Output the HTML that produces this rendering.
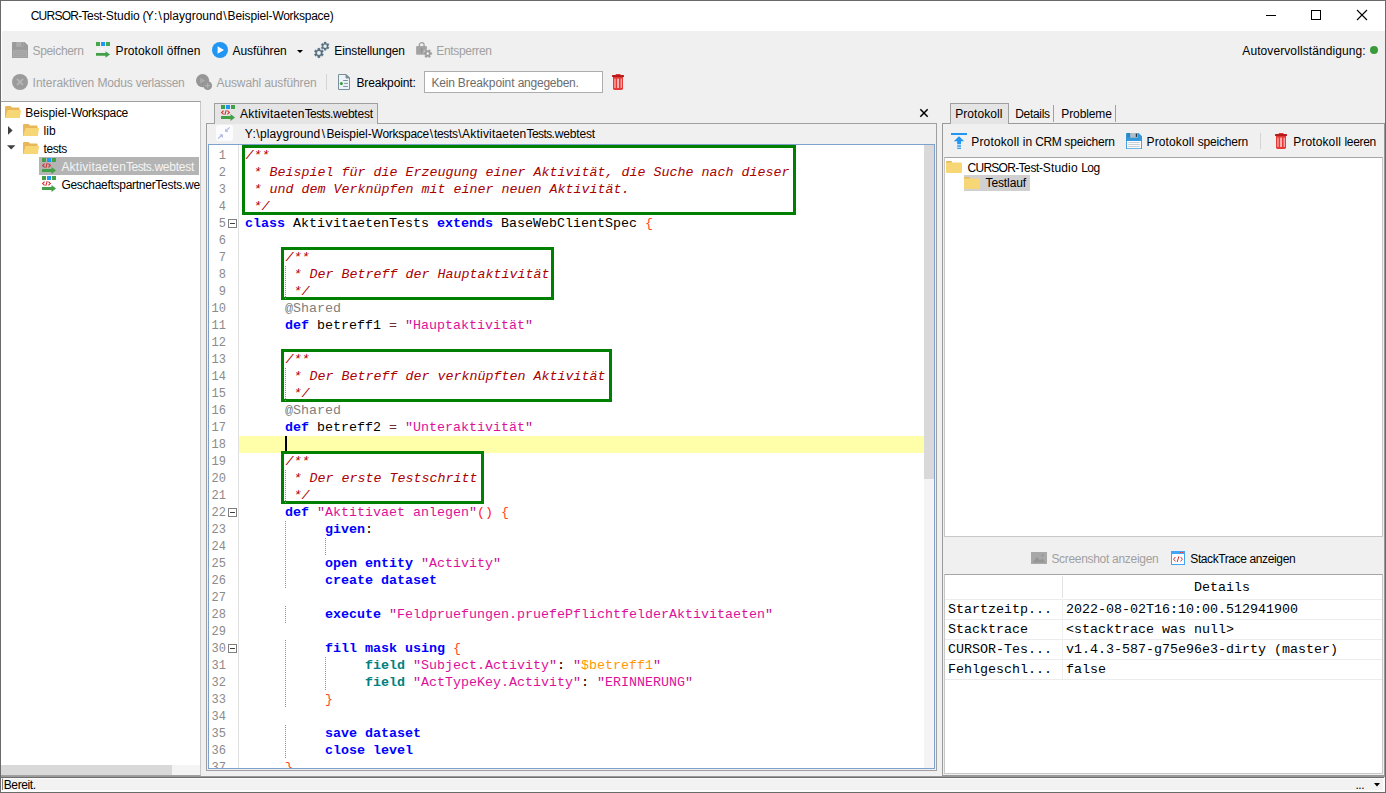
<!DOCTYPE html>
<html lang="de"><head><meta charset="utf-8"><title>CURSOR-Test-Studio</title>
<style>
html,body{margin:0;padding:0;}
body{width:1386px;height:793px;overflow:hidden;background:#f0f0f0;position:relative;font-family:"Liberation Sans",sans-serif;font-size:12px;}
.b{position:absolute;box-sizing:border-box;}
.t{position:absolute;white-space:pre;font-family:"Liberation Sans",sans-serif;font-size:12px;line-height:14px;}
svg{position:absolute;overflow:visible;}
.code{position:absolute;white-space:pre;font-family:"Liberation Mono",monospace;font-size:13.333px;line-height:17px;height:17px;color:#000;}
.ln{position:absolute;white-space:pre;font-family:"Liberation Mono",monospace;font-size:12px;line-height:17px;height:17px;color:#8a8a8a;text-align:right;width:24px;left:202px;}
.c{color:#aa0000;font-style:italic;position:relative;left:0.6px;}
.k{color:#0000ff;font-weight:bold;}
.f{color:#008080;font-weight:bold;}
.s{color:#dd1199;}
.q{color:#c01088;}
.r{color:#ff4a1c;}
.o{color:#703030;}
.v{color:#ff9900;}
.p{color:#ff2030;}
.a{color:#808080;}
.gb{position:absolute;box-sizing:border-box;border:3px solid #008000;}
.guide{position:absolute;width:1px;background:repeating-linear-gradient(to bottom,#909090 0,#909090 1px,transparent 1px,transparent 2px);}
.fold{position:absolute;box-sizing:border-box;width:9px;height:9px;border:1px solid #808080;background:#fff;}
.fold:after{content:"";position:absolute;left:1px;top:3px;width:5px;height:1px;background:#404040;}
.tc{position:absolute;white-space:pre;font-family:"Liberation Mono",monospace;font-size:13.333px;line-height:17px;color:#000;}
</style></head><body>

<div class="b " style="left:0px;top:0px;width:1386px;height:31px;background:#ffffff;"></div>
<span class="t" style="left:30.7px;top:9px;color:#000;letter-spacing:-0.757px;">CURSOR-</span>
<span class="t" style="left:81.4px;top:9px;color:#000;letter-spacing:-0.343px;">Test-</span>
<span class="t" style="left:105.7px;top:9px;color:#000;letter-spacing:0.006px;">Studio </span>
<span class="t" style="left:142.40px;top:9px;color:#000;">(</span>
<span class="t" style="left:145.7px;top:9px;color:#000;letter-spacing:1.061px;">Y:\</span>
<span class="t" style="left:162.9px;top:9px;color:#000;letter-spacing:0.011px;">playground</span>
<span class="t" style="left:223.33px;top:9px;color:#000;">\</span>
<span class="t" style="left:227.6px;top:9px;color:#000;letter-spacing:-0.137px;">Beispiel-</span>
<span class="t " style="left:272.4px;top:9px;color:#000;letter-spacing:-0.280px;">Workspace)</span>
<div class="b " style="left:1266px;top:15px;width:10px;height:1px;background:#000;"></div>
<div class="b " style="left:1311px;top:10px;width:10px;height:10px;border:1px solid #000;"></div>
<svg style="left:1357px;top:10px" width="10" height="10" viewBox="0 0 10 10"><path d="M0 0L10 10M10 0L0 10" stroke="#000" stroke-width="1.1" fill="none"/></svg>
<div class="b " style="left:1px;top:31px;width:1px;height:70px;background:#fff;"></div>
<svg style="left:12px;top:42px" width="16" height="16" viewBox="0 0 16 16"><path d="M0.6 0H12.6L16 3.3V15.4Q16 16 15.4 16H0.6Q0 16 0 15.4V0.6Q0 0 0.6 0Z" fill="#9b9b9b"/><rect x="4.2" y="0" width="7.5" height="4.7" fill="#adadad"/><rect x="9.8" y="0.6" width="1.3" height="3.3" fill="#949494"/><rect x="0.9" y="8" width="14.2" height="7.3" fill="#ababab"/><path d="M2.2 9.6H13.8M2.2 11.6H13.8M2.2 13.6H13.8" stroke="#9e9e9e" stroke-width="0.8"/></svg>
<span class="t " style="left:32.5px;top:44px;color:#a0a0a0;letter-spacing:-0.327px;">Speichern</span>
<svg style="left:96px;top:42px" width="14" height="16" viewBox="0 0 14 16"><rect x="0" y="0" width="4" height="4" fill="#47a84b"/><rect x="5" y="0" width="4" height="4" fill="#2196f3"/><rect x="10" y="0" width="4" height="4" fill="#47a84b"/><path d="M1 5.4L3.6 7.2L1 9ZM5 5.4L7.6 7.2L5 9Z" fill="#fafafa"/><path d="M0 11H9.5V9.2L14 12.4L9.5 15.7V13.8H0Z" fill="#43a047"/></svg>
<span class="t" style="left:115.5px;top:44px;color:#000;letter-spacing:0.127px;">Protokoll </span>
<span class="t " style="left:166.8px;top:44px;color:#000;letter-spacing:0.074px;">öffnen</span>
<svg style="left:212px;top:42px" width="16" height="16" viewBox="0 0 16 16"><circle cx="8" cy="8" r="8" fill="#2196f3"/><path d="M5.6 4.2L12 8L5.6 11.8Z" fill="#fff"/></svg>
<span class="t " style="left:232.5px;top:44px;color:#000;letter-spacing:-0.056px;">Ausführen</span>
<svg style="left:297px;top:49.5px" width="6" height="3" viewBox="0 0 6 3"><path d="M0 0H6L3 3Z" fill="#000"/></svg>
<svg style="left:314px;top:42px" width="16" height="16" viewBox="0 0 16 16"><path d="M3.76 6.34L6.04 6.34L6.05 7.84L7.06 8.43L8.37 7.68L9.51 9.66L8.21 10.41L8.21 11.59L9.51 12.34L8.37 14.32L7.06 13.57L6.05 14.16L6.04 15.66L3.76 15.66L3.75 14.16L2.74 13.57L1.43 14.32L0.29 12.34L1.59 11.59L1.59 10.41L0.29 9.66L1.43 7.68L2.74 8.43L3.75 7.84ZM7.05 11.00A2.15 2.15 0 1 0 2.75 11.00A2.15 2.15 0 1 0 7.05 11.00Z" fill="#547080" fill-rule="evenodd" stroke="#547080" stroke-width="0.35" stroke-linejoin="round"/><path d="M10.10 0.12L12.10 0.12L12.10 1.44L12.99 1.95L14.13 1.30L15.13 3.02L13.99 3.69L13.99 4.71L15.13 5.38L14.13 7.10L12.99 6.45L12.10 6.96L12.10 8.28L10.10 8.28L10.10 6.96L9.21 6.45L8.07 7.10L7.07 5.38L8.21 4.71L8.21 3.69L7.07 3.02L8.07 1.30L9.21 1.95L10.10 1.44ZM13.00 4.20A1.9 1.9 0 1 0 9.20 4.20A1.9 1.9 0 1 0 13.00 4.20Z" fill="#547080" fill-rule="evenodd" stroke="#547080" stroke-width="0.35" stroke-linejoin="round"/></svg>
<span class="t " style="left:334.3px;top:44px;color:#000;letter-spacing:-0.120px;">Einstellungen</span>
<svg style="left:416px;top:42px" width="17" height="16" viewBox="0 0 17 16"><path d="M3.3 4.6V3.1A2.4 2.4 0 0 1 8.1 3.1V4.6" fill="none" stroke="#a0a0a0" stroke-width="1.3"/><rect x="0.1" y="4" width="10.8" height="8.8" rx="1.3" fill="#a2a2a2"/><circle cx="5.5" cy="7.2" r="0.9" fill="#8e8e8e"/><rect x="5.1" y="7.2" width="0.8" height="3.2" fill="#8e8e8e"/><circle cx="11.7" cy="11.6" r="4.6" fill="#f0f0f0" opacity="0.55"/><path d="M12.88 7.57L14.60 8.57L13.95 9.71L14.46 10.60L15.78 10.60L15.78 12.60L14.46 12.60L13.95 13.49L14.60 14.63L12.88 15.63L12.21 14.49L11.19 14.49L10.52 15.63L8.80 14.63L9.45 13.49L8.94 12.60L7.62 12.60L7.62 10.60L8.94 10.60L9.45 9.71L8.80 8.57L10.52 7.57L11.19 8.71L12.21 8.71ZM13.20 11.60A1.5 1.5 0 1 0 10.20 11.60A1.5 1.5 0 1 0 13.20 11.60Z" fill="#9c9c9c" fill-rule="evenodd" stroke="#9c9c9c" stroke-width="0.35" stroke-linejoin="round"/></svg>
<span class="t " style="left:436.3px;top:44px;color:#a0a0a0;letter-spacing:-0.330px;">Entsperren</span>
<span class="t " style="left:1242.3px;top:44px;color:#000;letter-spacing:0.090px;">Autovervollständigung:</span>
<div class="b " style="left:1370px;top:46px;width:8px;height:8px;background:#3a9a3a;border-radius:50%;"></div>
<svg style="left:12px;top:74px" width="16" height="16" viewBox="0 0 16 16"><circle cx="8" cy="8" r="8" fill="#9b9b9b"/><path d="M5 5L11 11M11 5L5 11" stroke="#b9b9b9" stroke-width="1.5" fill="none"/></svg>
<span class="t" style="left:32.6px;top:76px;color:#a0a0a0;letter-spacing:-0.037px;">Interaktiven </span>
<span class="t" style="left:97.5px;top:76px;color:#a0a0a0;letter-spacing:-0.177px;">Modus </span>
<span class="t " style="left:135.8px;top:76px;color:#a0a0a0;letter-spacing:-0.307px;">verlassen</span>
<svg style="left:196px;top:74px" width="16" height="16" viewBox="0 0 16 16"><circle cx="6.6" cy="6.6" r="6.6" fill="#969696"/><path d="M4.1 3.7L9.4 6.6L4.1 9.5Z" fill="#aaaaaa"/><circle cx="11.7" cy="11.6" r="4.4" fill="#969696"/><path d="M9.2 11.6H14.2M11.7 9.1V14.1" stroke="#b6b6b6" stroke-width="1"/></svg>
<span class="t" style="left:216.6px;top:76px;color:#a0a0a0;letter-spacing:-0.138px;">Auswahl </span>
<span class="t " style="left:264.2px;top:76px;color:#a0a0a0;letter-spacing:-0.108px;">ausführen</span>
<div class="b " style="left:326px;top:74px;width:1px;height:16px;background:#d4d4d4;"></div>
<svg style="left:338px;top:74px" width="12" height="16" viewBox="0 0 12 16"><path d="M0.5 0.5H8L11.5 4V15.5H0.5Z" fill="#eef3f8" stroke="#78909c" stroke-width="1"/><path d="M8 0.5V4H11.5Z" fill="#78909c" stroke="#78909c" stroke-width="1" stroke-linejoin="round"/><circle cx="3.4" cy="9.4" r="1.5" fill="#339c3a"/><path d="M5.2 6.5H9.8M6.2 9.4H9.8M5.2 12.4H9.8" stroke="#78909c" stroke-width="1"/></svg>
<span class="t " style="left:356.5px;top:76px;color:#000;letter-spacing:-0.146px;">Breakpoint:</span>
<div class="b " style="left:424px;top:71px;width:179px;height:22px;background:#fff;border:1px solid #adadad;"></div>
<span class="t" style="left:431.6px;top:76px;color:#6d6d6d;letter-spacing:-0.232px;">Kein </span>
<span class="t" style="left:457.8px;top:76px;color:#6d6d6d;letter-spacing:-0.073px;">Breakpoint </span>
<span class="t " style="left:517.7px;top:76px;color:#6d6d6d;letter-spacing:-0.251px;">angegeben.</span>
<svg style="left:612px;top:74px" width="12" height="16" viewBox="0 0 12 16"><rect x="3.5" y="0" width="5.2" height="2" rx="0.9" fill="#e53935"/><rect x="0" y="1" width="12" height="2.1" rx="0.6" fill="#b71c1c"/><path d="M1 3H11V14.2Q11 16 9.4 16H2.6Q1 16 1 14.2Z" fill="#e53935"/><rect x="2.3" y="4.5" width="1.3" height="9.6" rx="0.5" fill="#ffb0b0"/><rect x="5.1" y="4.5" width="1.9" height="9.6" rx="0.5" fill="#ffb8b8"/><rect x="8.6" y="4.5" width="1.3" height="9.6" rx="0.5" fill="#ffb0b0"/></svg>
<div class="b " style="left:1px;top:101px;width:200px;height:675px;background:#fff;border-top:1px solid #a0a0a0;border-right:1px solid #c8c8c8;border-bottom:1px solid #a0a0a0;"></div>
<svg style="left:5px;top:106px" width="16" height="12" viewBox="0 0 16 12"><path d="M0 1.2Q0 0 1.2 0H5.2Q6 0 6.4 0.7L6.9 1.6H13.4Q14.6 1.6 14.6 2.8V12H0Z" fill="#e8b858"/><path d="M3.4 3.9H15.4Q16.2 3.9 16 4.7L14.9 11.2Q14.7 12 13.9 12H1Q0.2 12 0.5 11.2L2.3 4.7Q2.6 3.9 3.4 3.9Z" fill="#f7d775"/></svg>
<span class="t" style="left:25.3px;top:106px;color:#000;letter-spacing:-0.048px;">Beispiel-</span>
<span class="t " style="left:70.9px;top:106px;color:#000;letter-spacing:-0.301px;">Workspace</span>
<svg style="left:8px;top:126px" width="5" height="9" viewBox="0 0 5 9"><path d="M0 0L4.6 4.4L0 8.8Z" fill="#404040"/></svg>
<svg style="left:23px;top:124px" width="16" height="12" viewBox="0 0 16 12"><path d="M0 1.2Q0 0 1.2 0H5.2Q6 0 6.4 0.7L6.9 1.6H13.4Q14.6 1.6 14.6 2.8V12H0Z" fill="#e8b858"/><path d="M3.4 3.9H15.4Q16.2 3.9 16 4.7L14.9 11.2Q14.7 12 13.9 12H1Q0.2 12 0.5 11.2L2.3 4.7Q2.6 3.9 3.4 3.9Z" fill="#f7d775"/></svg>
<span class="t " style="left:43.5px;top:124px;color:#000;letter-spacing:0.028px;">lib</span>
<svg style="left:7px;top:145px" width="9" height="5" viewBox="0 0 9 5"><path d="M0 0.3H8.4L4.2 4.6Z" fill="#404040"/></svg>
<svg style="left:23px;top:142px" width="16" height="12" viewBox="0 0 16 12"><path d="M0 1.2Q0 0 1.2 0H5.2Q6 0 6.4 0.7L6.9 1.6H13.4Q14.6 1.6 14.6 2.8V12H0Z" fill="#e8b858"/><path d="M3.4 3.9H15.4Q16.2 3.9 16 4.7L14.9 11.2Q14.7 12 13.9 12H1Q0.2 12 0.5 11.2L2.3 4.7Q2.6 3.9 3.4 3.9Z" fill="#f7d775"/></svg>
<span class="t " style="left:43.5px;top:142px;color:#000;letter-spacing:-0.429px;">tests</span>
<div class="b " style="left:39px;top:157px;width:160px;height:18px;background:#b4b4b4;"></div>
<svg style="left:42px;top:158px" width="14" height="16" viewBox="0 0 14 16"><rect x="0" y="0" width="4" height="4" fill="#43a047"/><rect x="5" y="0" width="4" height="4" fill="#2196f3"/><rect x="10" y="0" width="4" height="4" fill="#43a047"/><path d="M2.6 5.6L0.6 7.5L2.6 9.4M6.4 5.6L8.4 7.5L6.4 9.4M5.2 5.2L3.8 9.8" stroke="#d32f2f" stroke-width="1.1" fill="none"/><path d="M0 11H9.5V9.1L14 12.5L9.5 15.9V13.9H0Z" fill="#43a047"/></svg>
<span class="t" style="left:61.4px;top:160px;color:#f4f4f4;letter-spacing:0.221px;">Aktivitaeten</span>
<span class="t" style="left:126.1px;top:160px;color:#f4f4f4;letter-spacing:-0.563px;">Tests</span>
<span class="t " style="left:151.3px;top:160px;color:#f4f4f4;letter-spacing:-0.250px;">.webtest</span>
<svg style="left:42px;top:176px" width="14" height="16" viewBox="0 0 14 16"><rect x="0" y="0" width="4" height="4" fill="#43a047"/><rect x="5" y="0" width="4" height="4" fill="#2196f3"/><rect x="10" y="0" width="4" height="4" fill="#43a047"/><path d="M2.6 5.6L0.6 7.5L2.6 9.4M6.4 5.6L8.4 7.5L6.4 9.4M5.2 5.2L3.8 9.8" stroke="#d32f2f" stroke-width="1.1" fill="none"/><path d="M0 11H9.5V9.1L14 12.5L9.5 15.9V13.9H0Z" fill="#43a047"/></svg>
<div class="b" style="left:61px;top:175px;width:138.6px;height:18px;overflow:hidden"><span class="t" style="left:0.4px;top:3px;letter-spacing:-0.28px">GeschaeftspartnerTests.webtest</span></div>
<div class="b " style="left:1px;top:765px;width:199px;height:10px;background:#f4f4f4;"></div>
<div class="b " style="left:1px;top:765px;width:171px;height:10px;background:#d9d9d9;"></div>
<div class="b " style="left:206px;top:123px;width:731px;height:648px;background:#f0f0f0;border:1px solid #a0a0a0;"></div>
<div class="b " style="left:214px;top:103px;width:164px;height:21px;background:#e5e5e5;border:1px solid #a0a0a0;border-bottom:none;"></div>
<svg style="left:221px;top:105px" width="14" height="16" viewBox="0 0 14 16"><rect x="0" y="0" width="4" height="4" fill="#43a047"/><rect x="5" y="0" width="4" height="4" fill="#2196f3"/><rect x="10" y="0" width="4" height="4" fill="#43a047"/><path d="M2.6 5.6L0.6 7.5L2.6 9.4M6.4 5.6L8.4 7.5L6.4 9.4M5.2 5.2L3.8 9.8" stroke="#d32f2f" stroke-width="1.1" fill="none"/><path d="M0 11H9.5V9.1L14 12.5L9.5 15.9V13.9H0Z" fill="#43a047"/></svg>
<span class="t" style="left:240px;top:107px;color:#000;letter-spacing:0.221px;">Aktivitaeten</span>
<span class="t" style="left:304.7px;top:107px;color:#000;letter-spacing:-0.563px;">Tests</span>
<span class="t " style="left:329.9px;top:107px;color:#000;letter-spacing:-0.225px;">.webtest</span>
<svg style="left:920px;top:109px" width="8" height="8" viewBox="0 0 8 8"><path d="M0.3 0.3L7.7 7.7M7.7 0.3L0.3 7.7" stroke="#000" stroke-width="1.5" fill="none"/></svg>
<div class="b " style="left:216px;top:125px;width:17px;height:16px;background:#fcfcfe;border-radius:3px;"></div>
<svg style="left:216px;top:125px" width="17" height="16" viewBox="0 0 17 16"><path d="M13.6 2.3L9.6 6.4" stroke="#b0b4e2" stroke-width="1.2" fill="none"/><path d="M9.2 6.8V3.4L12.6 6.8Z" fill="#b0b4e2"/><path d="M2 13.6L6.4 9.8" stroke="#b0b4e2" stroke-width="1.2" fill="none"/><path d="M6.8 9.5H3.4L6.8 12.9Z" fill="#b0b4e2"/></svg>
<span class="t" style="left:244.8px;top:127px;color:#000;letter-spacing:0.395px;">Y:\</span>
<span class="t" style="left:260px;top:127px;color:#000;letter-spacing:0.101px;">playground</span>
<span class="t" style="left:321.73px;top:127px;color:#000;">\</span>
<span class="t" style="left:326.4px;top:127px;color:#000;letter-spacing:-0.092px;">Beispiel-</span>
<span class="t" style="left:371.6px;top:127px;color:#000;letter-spacing:-0.268px;">Workspace</span>
<span class="t" style="left:429.83px;top:127px;color:#000;">\</span>
<span class="t" style="left:434px;top:127px;color:#000;letter-spacing:-0.349px;">tests</span>
<span class="t" style="left:458.18px;top:127px;color:#000;">\</span>
<span class="t" style="left:462.1px;top:127px;color:#000;letter-spacing:0.196px;">Aktivitaeten</span>
<span class="t" style="left:526.5px;top:127px;color:#000;letter-spacing:-0.583px;">Tests</span>
<span class="t " style="left:551.6px;top:127px;color:#000;letter-spacing:-0.175px;">.webtest</span>
<div class="b " style="left:208px;top:144px;width:727px;height:625px;background:#fff;border:1px solid #7da2ce;"></div>
<div class="b" style="left:209px;top:145px;width:725px;height:623px;overflow:hidden">
<div class="b" style="left:29px;top:0px;width:1px;height:623px;background:#e0e0e0;"></div>
<div class="b" style="left:30px;top:291px;width:685px;height:17px;background:#ffffaa;"></div>
<div class="b" style="left:715px;top:0px;width:10px;height:623px;background:#f4f4f4;"></div>
<div class="b" style="left:715px;top:0px;width:10px;height:334px;background:#d9d9d9;"></div>
<div class="ln" style="top:3px;left:-7px">1</div>
<div class="code" style="left:36px;top:2px"><span class="c">/**</span></div>
<div class="ln" style="top:20px;left:-7px">2</div>
<div class="code" style="left:36px;top:19px"><span class="c"> * Beispiel für die Erzeugung einer Aktivität, die Suche nach dieser</span></div>
<div class="ln" style="top:37px;left:-7px">3</div>
<div class="code" style="left:36px;top:36px"><span class="c"> * und dem Verknüpfen mit einer neuen Aktivität.</span></div>
<div class="ln" style="top:54px;left:-7px">4</div>
<div class="code" style="left:36px;top:53px"><span class="c"> */</span></div>
<div class="ln" style="top:71px;left:-7px">5</div>
<div class="code" style="left:36px;top:70px"><span class="k">class</span> AktivitaetenTests <span class="k">extends</span> BaseWebClientSpec <span class="r">{</span></div>
<div class="ln" style="top:88px;left:-7px">6</div>
<div class="ln" style="top:105px;left:-7px">7</div>
<div class="code" style="left:76px;top:104px"><span class="c">/**</span></div>
<div class="ln" style="top:122px;left:-7px">8</div>
<div class="code" style="left:76px;top:121px"><span class="c"> * Der Betreff der Hauptaktivität</span></div>
<div class="ln" style="top:139px;left:-7px">9</div>
<div class="code" style="left:76px;top:138px"><span class="c"> */</span></div>
<div class="ln" style="top:156px;left:-7px">10</div>
<div class="code" style="left:76px;top:155px"><span class="a">@Shared</span></div>
<div class="ln" style="top:173px;left:-7px">11</div>
<div class="code" style="left:76px;top:172px"><span class="k">def</span> betreff1 <span class="o">=</span> <span class="q">"</span><span class="s">Hauptaktivität</span><span class="q">"</span></div>
<div class="ln" style="top:190px;left:-7px">12</div>
<div class="ln" style="top:207px;left:-7px">13</div>
<div class="code" style="left:76px;top:206px"><span class="c">/**</span></div>
<div class="ln" style="top:224px;left:-7px">14</div>
<div class="code" style="left:76px;top:223px"><span class="c"> * Der Betreff der verknüpften Aktivität</span></div>
<div class="ln" style="top:241px;left:-7px">15</div>
<div class="code" style="left:76px;top:240px"><span class="c"> */</span></div>
<div class="ln" style="top:258px;left:-7px">16</div>
<div class="code" style="left:76px;top:257px"><span class="a">@Shared</span></div>
<div class="ln" style="top:275px;left:-7px">17</div>
<div class="code" style="left:76px;top:274px"><span class="k">def</span> betreff2 <span class="o">=</span> <span class="q">"</span><span class="s">Unteraktivität</span><span class="q">"</span></div>
<div class="ln" style="top:292px;left:-7px">18</div>
<div class="ln" style="top:309px;left:-7px">19</div>
<div class="code" style="left:76px;top:308px"><span class="c">/**</span></div>
<div class="ln" style="top:326px;left:-7px">20</div>
<div class="code" style="left:76px;top:325px"><span class="c"> * Der erste Testschritt</span></div>
<div class="ln" style="top:343px;left:-7px">21</div>
<div class="code" style="left:76px;top:342px"><span class="c"> */</span></div>
<div class="ln" style="top:360px;left:-7px">22</div>
<div class="code" style="left:76px;top:359px"><span class="k">def</span> <span class="q">"</span><span class="s">Aktitivaet anlegen</span><span class="q">"</span><span class="p">()</span> <span class="r">{</span></div>
<div class="ln" style="top:377px;left:-7px">23</div>
<div class="code" style="left:116px;top:376px"><span class="k">given</span>:</div>
<div class="ln" style="top:394px;left:-7px">24</div>
<div class="ln" style="top:411px;left:-7px">25</div>
<div class="code" style="left:116px;top:410px"><span class="k">open entity</span> <span class="q">"</span><span class="s">Activity</span><span class="q">"</span></div>
<div class="ln" style="top:428px;left:-7px">26</div>
<div class="code" style="left:116px;top:427px"><span class="k">create dataset</span></div>
<div class="ln" style="top:445px;left:-7px">27</div>
<div class="ln" style="top:462px;left:-7px">28</div>
<div class="code" style="left:116px;top:461px"><span class="k">execute</span> <span class="q">"</span><span class="s">Feldpruefungen.pruefePflichtfelderAktivitaeten</span><span class="q">"</span></div>
<div class="ln" style="top:479px;left:-7px">29</div>
<div class="ln" style="top:496px;left:-7px">30</div>
<div class="code" style="left:116px;top:495px"><span class="k">fill mask using</span> <span class="r">{</span></div>
<div class="ln" style="top:513px;left:-7px">31</div>
<div class="code" style="left:156px;top:512px"><span class="f">field</span> <span class="q">"</span><span class="s">Subject.Activity</span><span class="q">"</span>: <span class="q">"</span><span class="v">$betreff1</span><span class="q">"</span></div>
<div class="ln" style="top:530px;left:-7px">32</div>
<div class="code" style="left:156px;top:529px"><span class="f">field</span> <span class="q">"</span><span class="s">ActTypeKey.Activity</span><span class="q">"</span>: <span class="q">"</span><span class="s">ERINNERUNG</span><span class="q">"</span></div>
<div class="ln" style="top:547px;left:-7px">33</div>
<div class="code" style="left:116px;top:546px"><span class="r">}</span></div>
<div class="ln" style="top:564px;left:-7px">34</div>
<div class="ln" style="top:581px;left:-7px">35</div>
<div class="code" style="left:116px;top:580px"><span class="k">save dataset</span></div>
<div class="ln" style="top:598px;left:-7px">36</div>
<div class="code" style="left:116px;top:597px"><span class="k">close level</span></div>
<div class="ln" style="top:615px;left:-7px">37</div>
<div class="code" style="left:76px;top:614px"><span class="r">}</span></div>
<div class="gb" style="left:33px;top:0px;width:554px;height:70px"></div>
<div class="gb" style="left:72px;top:102px;width:273px;height:53px"></div>
<div class="gb" style="left:72px;top:204px;width:331px;height:53px"></div>
<div class="gb" style="left:72px;top:306px;width:203px;height:53px"></div>
<div class="guide" style="left:76px;top:121px;height:34px"></div>
<div class="guide" style="left:76px;top:223px;height:34px"></div>
<div class="guide" style="left:76px;top:325px;height:34px"></div>
<div class="guide" style="left:76px;top:376px;height:68px"></div>
<div class="guide" style="left:76px;top:461px;height:17px"></div>
<div class="guide" style="left:76px;top:495px;height:68px"></div>
<div class="guide" style="left:76px;top:580px;height:34px"></div>
<div class="guide" style="left:116px;top:393px;height:17px"></div>
<div class="guide" style="left:116px;top:512px;height:34px"></div>
<div class="fold" style="left:19px;top:74px"></div>
<div class="fold" style="left:19px;top:363px"></div>
<div class="fold" style="left:19px;top:499px"></div>
<div class="b" style="left:76px;top:291px;width:2px;height:15px;background:#000;"></div>
</div>
<div class="b " style="left:942px;top:123px;width:443px;height:653px;background:#f0f0f0;border:1px solid #999;"></div>
<div class="b " style="left:950px;top:103px;width:59px;height:21px;background:#e5e5e5;border:1px solid #a0a0a0;border-bottom:none;"></div>
<span class="t " style="left:955.2px;top:107px;color:#000;letter-spacing:0.068px;">Protokoll</span>
<span class="t " style="left:1015.2px;top:107px;color:#000;letter-spacing:-0.312px;">Details</span>
<div class="b " style="left:1053px;top:105px;width:1px;height:17px;background:#a0a0a0;"></div>
<span class="t " style="left:1061.3px;top:107px;color:#000;letter-spacing:-0.107px;">Probleme</span>
<div class="b " style="left:1115px;top:105px;width:1px;height:17px;background:#a0a0a0;"></div>
<svg style="left:951px;top:133px" width="16" height="16" viewBox="0 0 16 16"><rect x="0" y="0" width="16" height="2" fill="#2196f3"/><path d="M8 3.2L13.2 8.3H10V11.3H6.2V8.3H2.8Z" fill="#2196f3"/><rect x="6.2" y="12.3" width="3.8" height="1.4" fill="#2196f3"/><rect x="6.2" y="14.7" width="3.8" height="1.2" fill="#2196f3"/></svg>
<span class="t" style="left:971.3px;top:135px;color:#000;letter-spacing:0.147px;">Protokoll </span>
<span class="t" style="left:1022.8px;top:135px;color:#000;letter-spacing:-0.062px;">in </span>
<span class="t" style="left:1035.3px;top:135px;color:#000;letter-spacing:-0.418px;">CRM </span>
<span class="t " style="left:1064.3px;top:135px;color:#000;letter-spacing:-0.170px;">speichern</span>
<svg style="left:1126px;top:133px" width="16" height="16" viewBox="0 0 16 16"><path d="M0.6 0H12.6L16 3.3V15.4Q16 16 15.4 16H0.6Q0 16 0 15.4V0.6Q0 0 0.6 0Z" fill="#3498db"/><rect x="1.2" y="0" width="3" height="4.4" fill="#2e86c1"/><rect x="4.2" y="0" width="7.5" height="4.7" fill="#b0bec5"/><rect x="9.8" y="0.6" width="1.3" height="3.3" fill="#263238"/><rect x="0.9" y="8" width="14.2" height="7.3" fill="#fff"/><path d="M2.2 9.6H13.8M2.2 11.6H13.8M2.2 13.6H13.8" stroke="#b0bec5" stroke-width="0.8"/></svg>
<span class="t" style="left:1146.6px;top:135px;color:#000;letter-spacing:0.107px;">Protokoll </span>
<span class="t " style="left:1197.7px;top:135px;color:#000;letter-spacing:-0.203px;">speichern</span>
<div class="b " style="left:1260px;top:133px;width:1px;height:16px;background:#d4d4d4;"></div>
<svg style="left:1275px;top:133px" width="12" height="16" viewBox="0 0 12 16"><rect x="3.5" y="0" width="5.2" height="2" rx="0.9" fill="#e53935"/><rect x="0" y="1" width="12" height="2.1" rx="0.6" fill="#b71c1c"/><path d="M1 3H11V14.2Q11 16 9.4 16H2.6Q1 16 1 14.2Z" fill="#e53935"/><rect x="2.3" y="4.5" width="1.3" height="9.6" rx="0.5" fill="#ffb0b0"/><rect x="5.1" y="4.5" width="1.9" height="9.6" rx="0.5" fill="#ffb8b8"/><rect x="8.6" y="4.5" width="1.3" height="9.6" rx="0.5" fill="#ffb0b0"/></svg>
<span class="t" style="left:1293.3px;top:135px;color:#000;letter-spacing:0.107px;">Protokoll </span>
<span class="t " style="left:1344.4px;top:135px;color:#000;letter-spacing:-0.293px;">leeren</span>
<div class="b " style="left:944px;top:157px;width:439px;height:380px;background:#fff;border:1px solid #c8c8c8;border-top-color:#a6a6a6;"></div>
<svg style="left:946px;top:161px" width="16" height="12" viewBox="0 0 16 12"><path d="M0 1Q0 0 1 0H5Q5.8 0 6 0.8L6.2 2H0Z" fill="#e8b858"/><rect x="0" y="1.4" width="16" height="10.6" rx="1" fill="#f7d775"/></svg>
<span class="t" style="left:967.6px;top:161px;color:#000;letter-spacing:-0.743px;">CURSOR-</span>
<span class="t" style="left:1018.4px;top:161px;color:#000;letter-spacing:-0.323px;">Test-</span>
<span class="t" style="left:1042.8px;top:161px;color:#000;letter-spacing:0.149px;">Studio </span>
<span class="t " style="left:1081.2px;top:161px;color:#000;letter-spacing:-0.544px;">Log</span>
<div class="b " style="left:964px;top:175px;width:66px;height:16px;background:#d0d0d0;"></div>
<svg style="left:964px;top:177px" width="16" height="12" viewBox="0 0 16 12"><path d="M0 1Q0 0 1 0H5Q5.8 0 6 0.8L6.2 2H0Z" fill="#e8b858"/><rect x="0" y="1.4" width="16" height="10.6" rx="1" fill="#f7d775"/></svg>
<span class="t " style="left:985.5px;top:176px;color:#000;letter-spacing:-0.107px;">Testlauf</span>
<svg style="left:1031px;top:552px" width="16" height="12" viewBox="0 0 16 12"><rect x="0" y="0" width="16" height="12" fill="#a8a8a8"/><path d="M1.5 10.5L6 5L9 8.5L11 6.5L14.5 10.5Z" fill="#959595"/><circle cx="11.6" cy="3.4" r="1.2" fill="#959595"/></svg>
<span class="t" style="left:1051.4px;top:552px;color:#a0a0a0;letter-spacing:-0.313px;">Screenshot </span>
<span class="t " style="left:1112px;top:552px;color:#a0a0a0;letter-spacing:-0.277px;">anzeigen</span>
<svg style="left:1171px;top:551px" width="14" height="14" viewBox="0 0 14 14"><rect x="0.5" y="0.5" width="13" height="13" fill="#fff" stroke="#42a5f5" stroke-width="1"/><rect x="0" y="0" width="14" height="3" fill="#42a5f5"/><path d="M4.4 6L2.6 8.2L4.4 10.4M9.6 6L11.4 8.2L9.6 10.4M7.8 5.4L6.2 11" stroke="#d32f2f" stroke-width="1" fill="none"/><rect x="9" y="1" width="1" height="1" fill="#e53935"/><rect x="11" y="1" width="1" height="1" fill="#e53935"/></svg>
<span class="t" style="left:1190.3px;top:552px;color:#000;letter-spacing:-0.407px;">StackTrace </span>
<span class="t " style="left:1249.4px;top:552px;color:#000;letter-spacing:-0.352px;">anzeigen</span>
<div class="b " style="left:944px;top:574px;width:439px;height:200px;background:#fff;border:1px solid #c8c8c8;border-top-color:#a6a6a6;"></div>
<div class="b " style="left:1062px;top:576px;width:1px;height:22px;background:#e2e2e2;"></div>
<div class="b " style="left:945px;top:599px;width:437px;height:1px;background:#ececec;"></div>
<div class="b " style="left:945px;top:619px;width:437px;height:1px;background:#ececec;"></div>
<div class="b " style="left:945px;top:639px;width:437px;height:1px;background:#ececec;"></div>
<div class="b " style="left:945px;top:659px;width:437px;height:1px;background:#ececec;"></div>
<div class="b " style="left:945px;top:679px;width:437px;height:1px;background:#ececec;"></div>
<div class="b " style="left:1062px;top:599px;width:1px;height:80px;background:#f0f0f0;"></div>
<span class="tc" style="left:1194px;top:579px">Details</span>
<span class="tc" style="left:948px;top:601px">Startzeitp...</span><span class="tc" style="left:1066px;top:601px">2022-08-02T16:10:00.512941900</span>
<span class="tc" style="left:948px;top:621px">Stacktrace</span><span class="tc" style="left:1066px;top:621px">&lt;stacktrace was null&gt;</span>
<span class="tc" style="left:948px;top:641px">CURSOR-Tes...</span><span class="tc" style="left:1066px;top:641px">v1.4.3-587-g75e96e3-dirty (master)</span>
<span class="tc" style="left:948px;top:661px">Fehlgeschl...</span><span class="tc" style="left:1066px;top:661px">false</span>
<div class="b " style="left:1px;top:776px;width:1384px;height:1px;background:#9a9a9a;"></div>
<div class="b " style="left:1px;top:777px;width:1383px;height:1px;background:#6e6e6e;"></div>
<div class="b " style="left:1px;top:778px;width:1384px;height:14px;background:#fcfcfc;"></div>
<div class="b " style="left:2px;top:778px;width:1381px;height:12px;background:#f2f2f2;border-left:1px solid #808080;border-top:1px solid #fafafa;"></div>
<span class="t " style="left:3.7px;top:778px;color:#000;letter-spacing:-0.370px;">Bereit.</span>
<span class="t " style="left:1355.5px;top:778px;color:#000;letter-spacing:-0.505px;">...</span>
<svg style="left:1373.5px;top:783px" width="6" height="4" viewBox="0 0 6 4"><path d="M0 0H6L3 3.6Z" fill="#000"/></svg>
<div class="b " style="left:0px;top:0px;width:1386px;height:1px;background:#6a6a6a;"></div>
<div class="b " style="left:0px;top:0px;width:1px;height:793px;background:#6a6a6a;"></div>
<div class="b " style="left:1385px;top:0px;width:1px;height:793px;background:#6a6a6a;"></div>
<div class="b " style="left:0px;top:792px;width:1386px;height:1px;background:#6a6a6a;"></div>
</body></html>
